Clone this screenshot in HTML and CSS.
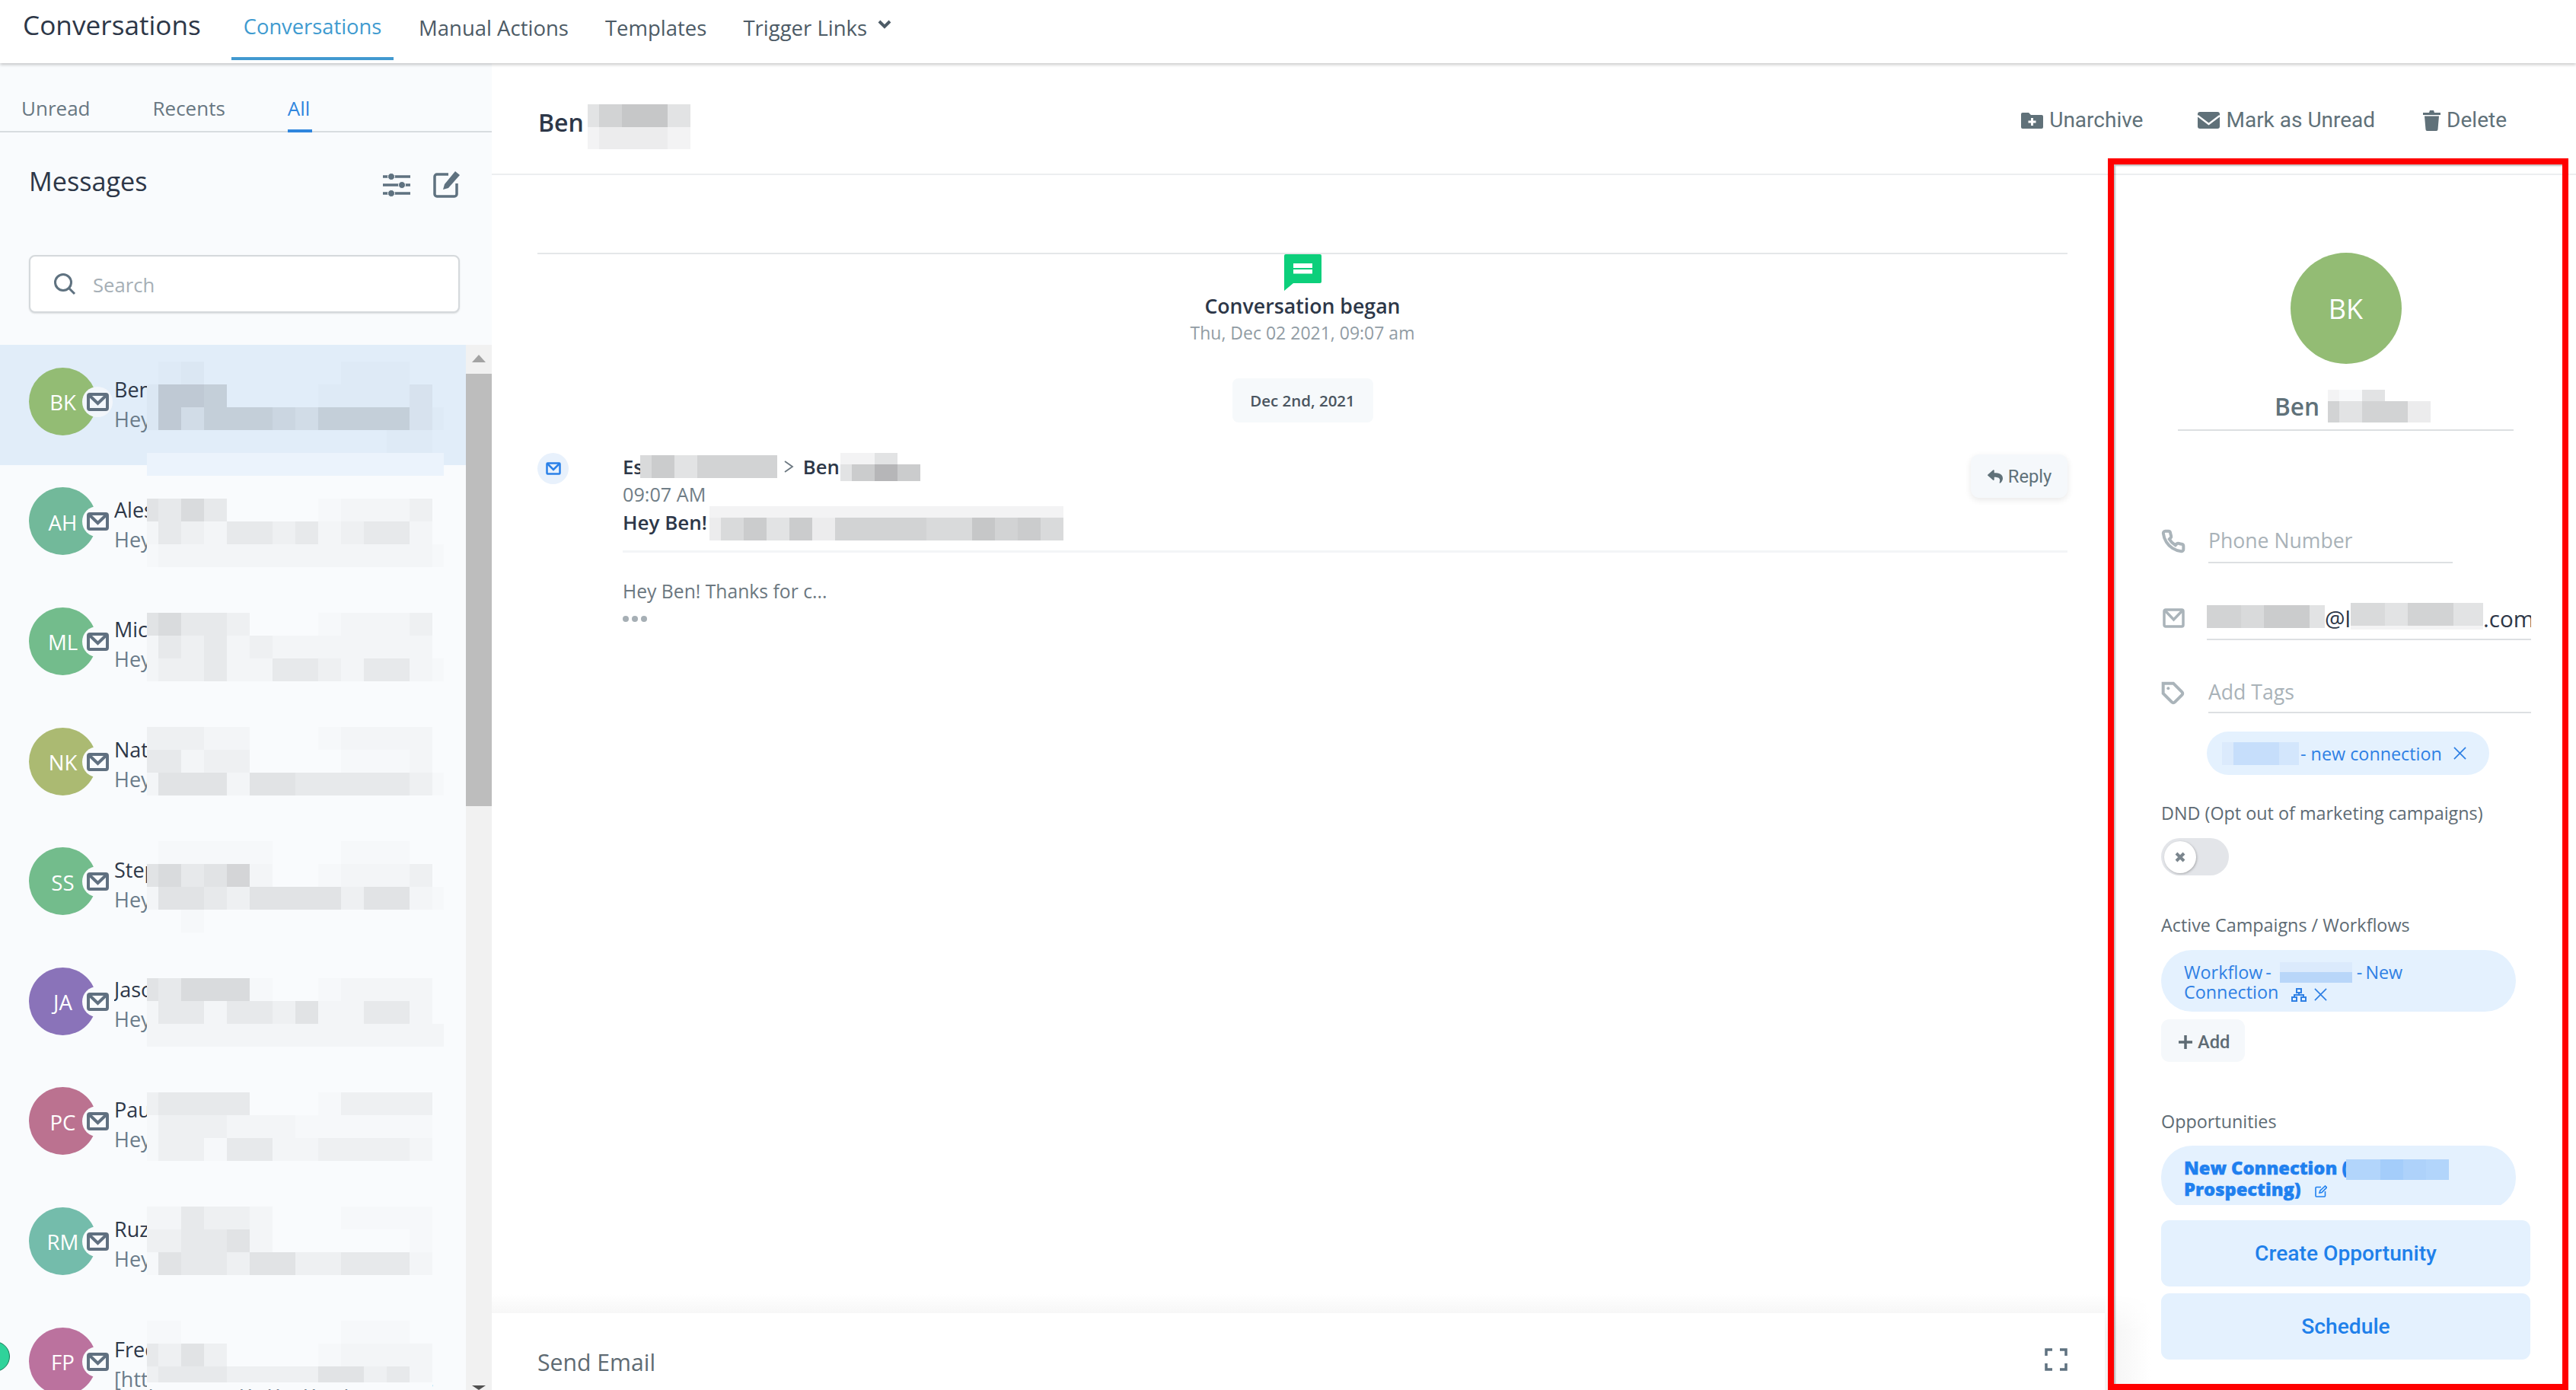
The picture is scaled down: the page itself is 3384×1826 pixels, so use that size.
FILE: index.html
```html
<!DOCTYPE html>
<html lang="en">
<head>
<meta charset="utf-8">
<title>Conversations</title>
<link rel="stylesheet" href="styles.css">
</head>
<body>
<div class="app">
  <header class="topbar">
    <h1 class="app-title">Conversations</h1>
    <nav class="topnav">
      <a class="topnav-item is-active">Conversations</a>
      <a class="topnav-item">Manual Actions</a>
      <a class="topnav-item">Templates</a>
      <a class="topnav-item">Trigger Links
        <svg class="chev" viewBox="0 0 20 14"><path d="M3 3l7 7 7-7"/></svg>
      </a>
    </nav>
  </header>

  <div class="workspace">
    <aside class="sidebar">
      <div class="subtabs">
        <a class="subtab">Unread</a>
        <a class="subtab">Recents</a>
        <a class="subtab is-active">All</a>
      </div>
      <div class="msg-head">
        <h2 class="msg-title">Messages</h2>
        <svg class="ic-sliders" viewBox="0 0 36 32"><path d="M0 5h36M0 16h36M0 27h36"/><circle cx="11" cy="5" r="4.5"/><circle cx="25" cy="16" r="4.5"/><circle cx="11" cy="27" r="4.5"/></svg>
        <svg class="ic-compose" viewBox="0 0 36 36"><path class="ln" d="M20 5H5a3 3 0 0 0-3 3v23a3 3 0 0 0 3 3h23a3 3 0 0 0 3-3V17"/><path class="fl" d="M29 1l6 5-15 17-7 2 2-7z"/></svg>
      </div>
      <div class="search">
        <svg class="ic-search" viewBox="0 0 30 30"><circle cx="13" cy="13" r="10.5"/><path d="M21 21l7 7"/></svg>
        <span class="search-ph">Search</span>
      </div>
      <div class="list">
        <div class="rows">
          <div class="row is-active"><div class="avatar av-bk">BK<span class="notch"><svg class="ic-mail" viewBox="0 0 29 24"><rect x="2" y="2" width="25" height="20" rx="2"/><path d="M3 3l11.500 11L26 3"/></svg></span></div><div class="who"><div class="who-name">Ben K</div><div class="who-sub">Hey Ben</div></div></div>
          <div class="row"><div class="avatar av-ah">AH<span class="notch"><svg class="ic-mail" viewBox="0 0 29 24"><rect x="2" y="2" width="25" height="20" rx="2"/><path d="M3 3l11.500 11L26 3"/></svg></span></div><div class="who"><div class="who-name">Ales H</div><div class="who-sub">Hey Ales</div></div></div>
          <div class="row"><div class="avatar av-ml">ML<span class="notch"><svg class="ic-mail" viewBox="0 0 29 24"><rect x="2" y="2" width="25" height="20" rx="2"/><path d="M3 3l11.500 11L26 3"/></svg></span></div><div class="who"><div class="who-name">Mich</div><div class="who-sub">Hey Mich</div></div></div>
          <div class="row"><div class="avatar av-nk">NK<span class="notch"><svg class="ic-mail" viewBox="0 0 29 24"><rect x="2" y="2" width="25" height="20" rx="2"/><path d="M3 3l11.500 11L26 3"/></svg></span></div><div class="who"><div class="who-name">Nate</div><div class="who-sub">Hey Nate</div></div></div>
          <div class="row"><div class="avatar av-ss">SS<span class="notch"><svg class="ic-mail" viewBox="0 0 29 24"><rect x="2" y="2" width="25" height="20" rx="2"/><path d="M3 3l11.500 11L26 3"/></svg></span></div><div class="who"><div class="who-name">Step</div><div class="who-sub">Hey Step</div></div></div>
          <div class="row"><div class="avatar av-ja">JA<span class="notch"><svg class="ic-mail" viewBox="0 0 29 24"><rect x="2" y="2" width="25" height="20" rx="2"/><path d="M3 3l11.500 11L26 3"/></svg></span></div><div class="who"><div class="who-name">Jason</div><div class="who-sub">Hey Jason</div></div></div>
          <div class="row"><div class="avatar av-pc">PC<span class="notch"><svg class="ic-mail" viewBox="0 0 29 24"><rect x="2" y="2" width="25" height="20" rx="2"/><path d="M3 3l11.500 11L26 3"/></svg></span></div><div class="who"><div class="who-name">Paul</div><div class="who-sub">Hey Paul</div></div></div>
          <div class="row"><div class="avatar av-rm">RM<span class="notch"><svg class="ic-mail" viewBox="0 0 29 24"><rect x="2" y="2" width="25" height="20" rx="2"/><path d="M3 3l11.500 11L26 3"/></svg></span></div><div class="who"><div class="who-name">Ruza</div><div class="who-sub">Hey Ruza</div></div></div>
          <div class="row"><span class="online-dot"></span><div class="avatar av-fp">FP<span class="notch"><svg class="ic-mail" viewBox="0 0 29 24"><rect x="2" y="2" width="25" height="20" rx="2"/><path d="M3 3l11.500 11L26 3"/></svg></span></div><div class="who who-open"><div class="who-name">Fred</div><div class="who-sub">[https://storage.googleapis.com...</div></div></div>
        </div>
        <div class="scrollbar">
          <div class="sb-btn"><span class="tri-up"></span></div>
          <div class="sb-thumb"></div>
          <span class="tri-down"></span>
        </div>
        <svg class="mosaic-list" width="390" height="1351">
          <rect class="whiten" x="0" y="120" width="390"/>
          <rect class="a0" x="15" y="0" width="30"/><rect class="a1" x="45" y="0" width="30"/><rect class="a0" x="255" y="0" width="90"/>
          <rect class="a1" x="0" y="30" width="15"/><rect class="a6" x="15" y="30" width="60"/><rect class="a5" x="75" y="30" width="30"/><rect class="a0" x="225" y="30" width="120"/><rect class="a2" x="345" y="30" width="30"/>
          <rect class="a1" x="0" y="60" width="15"/><rect class="a6" x="15" y="60" width="30"/><rect class="a3" x="45" y="60" width="30"/><rect class="a5" x="75" y="60" width="90"/><rect class="a4" x="165" y="60" width="30"/><rect class="a3" x="195" y="60" width="30"/><rect class="a5" x="225" y="60" width="120"/><rect class="a2" x="345" y="60" width="30"/><rect class="a0" x="375" y="60" width="15"/>
          <rect class="a0" x="315" y="90" width="60"/>

          <rect class="a4" x="0" y="180" width="15"/><rect class="a3" x="15" y="180" width="30"/><rect class="a5" x="45" y="180" width="30"/><rect class="a3" x="75" y="180" width="30"/><rect class="a0" x="225" y="180" width="30"/><rect class="a1" x="255" y="180" width="90"/><rect class="a2" x="345" y="180" width="30"/>
          <rect class="a1" x="0" y="210" width="15"/><rect class="a3" x="15" y="210" width="30"/><rect class="a2" x="45" y="210" width="30"/><rect class="a1" x="75" y="210" width="30"/><rect class="a3" x="105" y="210" width="60"/><rect class="a2" x="165" y="210" width="30"/><rect class="a3" x="195" y="210" width="30"/><rect class="a1" x="225" y="210" width="30"/><rect class="a2" x="255" y="210" width="30"/><rect class="a3" x="285" y="210" width="60"/><rect class="a1" x="345" y="210" width="30"/>
          <rect class="a0" x="0" y="240" width="15"/><rect class="a1" x="15" y="240" width="360"/><rect class="a0" x="375" y="240" width="15"/>

          <rect class="a4" x="0" y="330" width="15"/><rect class="a5" x="15" y="330" width="30"/><rect class="a3" x="45" y="330" width="60"/><rect class="a2" x="105" y="330" width="30"/><rect class="a0" x="225" y="330" width="30"/><rect class="a1" x="255" y="330" width="90"/><rect class="a2" x="345" y="330" width="30"/>
          <rect class="a1" x="0" y="360" width="15"/><rect class="a3" x="15" y="360" width="30"/><rect class="a2" x="45" y="360" width="30"/><rect class="a3" x="75" y="360" width="30"/><rect class="a1" x="105" y="360" width="30"/><rect class="a2" x="135" y="360" width="30"/><rect class="a1" x="165" y="360" width="210"/>
          <rect class="a1" x="0" y="390" width="15"/><rect class="a2" x="15" y="390" width="60"/><rect class="a3" x="75" y="390" width="30"/><rect class="a1" x="105" y="390" width="60"/><rect class="a3" x="165" y="390" width="60"/><rect class="a2" x="225" y="390" width="30"/><rect class="a1" x="255" y="390" width="30"/><rect class="a3" x="285" y="390" width="60"/><rect class="a1" x="345" y="390" width="30"/><rect class="a0" x="375" y="390" width="15"/>

          <rect class="a2" x="0" y="480" width="75"/><rect class="a1" x="75" y="480" width="60"/><rect class="a0" x="225" y="480" width="30"/><rect class="a1" x="255" y="480" width="120"/>
          <rect class="a3" x="0" y="510" width="45"/><rect class="a1" x="45" y="510" width="30"/><rect class="a2" x="75" y="510" width="60"/><rect class="a0" x="255" y="510" width="90"/><rect class="a1" x="345" y="510" width="30"/>
          <rect class="a1" x="0" y="540" width="15"/><rect class="a4" x="15" y="540" width="90"/><rect class="a1" x="105" y="540" width="30"/><rect class="a4" x="135" y="540" width="60"/><rect class="a3" x="195" y="540" width="150"/><rect class="a2" x="345" y="540" width="30"/><rect class="a0" x="375" y="540" width="15"/>

          <rect class="a0" x="15" y="630" width="150"/><rect class="a0" x="255" y="630" width="90"/>
          <rect class="a4" x="0" y="660" width="15"/><rect class="a5" x="15" y="660" width="30"/><rect class="a3" x="45" y="660" width="30"/><rect class="a4" x="75" y="660" width="30"/><rect class="a6" x="105" y="660" width="30"/><rect class="a1" x="135" y="660" width="30"/><rect class="a0" x="225" y="660" width="30"/><rect class="a1" x="255" y="660" width="90"/><rect class="a2" x="345" y="660" width="30"/>
          <rect class="a1" x="0" y="690" width="15"/><rect class="a4" x="15" y="690" width="60"/><rect class="a3" x="75" y="690" width="30"/><rect class="a2" x="105" y="690" width="30"/><rect class="a4" x="135" y="690" width="120"/><rect class="a2" x="255" y="690" width="30"/><rect class="a4" x="285" y="690" width="60"/><rect class="a1" x="345" y="690" width="30"/><rect class="a0" x="375" y="690" width="15"/>
          <rect class="a0" x="45" y="720" width="30"/>

          <rect class="a4" x="0" y="810" width="15"/><rect class="a3" x="15" y="810" width="30"/><rect class="a5" x="45" y="810" width="90"/><rect class="a0" x="135" y="810" width="30"/><rect class="a0" x="225" y="810" width="30"/><rect class="a1" x="255" y="810" width="120"/>
          <rect class="a1" x="0" y="840" width="15"/><rect class="a3" x="15" y="840" width="60"/><rect class="a1" x="75" y="840" width="30"/><rect class="a3" x="105" y="840" width="60"/><rect class="a2" x="165" y="840" width="30"/><rect class="a4" x="195" y="840" width="30"/><rect class="a1" x="225" y="840" width="60"/><rect class="a3" x="285" y="840" width="60"/><rect class="a1" x="345" y="840" width="30"/>
          <rect class="a1" x="0" y="870" width="390"/>

          <rect class="a2" x="0" y="960" width="15"/><rect class="a3" x="15" y="960" width="120"/><rect class="a0" x="225" y="960" width="30"/><rect class="a2" x="255" y="960" width="120"/>
          <rect class="a0" x="0" y="990" width="15"/><rect class="a2" x="15" y="990" width="90"/><rect class="a1" x="105" y="990" width="90"/><rect class="a0" x="195" y="990" width="150"/><rect class="a0" x="345" y="990" width="30"/>
          <rect class="a0" x="0" y="1020" width="15"/><rect class="a2" x="15" y="1020" width="60"/><rect class="a0" x="75" y="1020" width="30"/><rect class="a3" x="105" y="1020" width="60"/><rect class="a1" x="165" y="1020" width="60"/><rect class="a2" x="225" y="1020" width="120"/><rect class="a1" x="345" y="1020" width="30"/>

          <rect class="a1" x="0" y="1110" width="45"/><rect class="a3" x="45" y="1110" width="30"/><rect class="a2" x="75" y="1110" width="60"/><rect class="a1" x="135" y="1110" width="30"/><rect class="a0" x="255" y="1110" width="120"/>
          <rect class="a2" x="0" y="1140" width="45"/><rect class="a3" x="45" y="1140" width="60"/><rect class="a4" x="105" y="1140" width="30"/><rect class="a1" x="135" y="1140" width="30"/><rect class="a0" x="345" y="1140" width="30"/>
          <rect class="a0" x="0" y="1170" width="15"/><rect class="a4" x="15" y="1170" width="30"/><rect class="a3" x="45" y="1170" width="60"/><rect class="a2" x="105" y="1170" width="30"/><rect class="a4" x="135" y="1170" width="60"/><rect class="a2" x="195" y="1170" width="60"/><rect class="a3" x="255" y="1170" width="90"/><rect class="a1" x="345" y="1170" width="30"/>

          <rect class="a0" x="0" y="1260" width="45"/><rect class="a0" x="255" y="1260" width="90"/>
          <rect class="a3" x="0" y="1290" width="15"/><rect class="a2" x="15" y="1290" width="30"/><rect class="a4" x="45" y="1290" width="30"/><rect class="a2" x="75" y="1290" width="30"/><rect class="a0" x="225" y="1290" width="30"/><rect class="a1" x="255" y="1290" width="120"/>
          <rect class="base" x="0" y="1320" width="375"/>
          <rect class="a2 short" x="0" y="1320" width="15"/><rect class="a3 short" x="15" y="1320" width="90"/><rect class="a2 short" x="105" y="1320" width="120"/><rect class="a4 short" x="225" y="1320" width="60"/><rect class="a2 short" x="285" y="1320" width="30"/><rect class="a3 short" x="315" y="1320" width="30"/><rect class="a1 short" x="345" y="1320" width="30"/>
        </svg>
      </div>
    </aside>

    <main class="main">
      <div class="conv-head">
        <div class="conv-name">Ben<svg class="mz mz-head" width="135" height="59"><rect class="b3" x="0" y="0" width="15" height="30"/><rect class="b5" x="15" y="0" width="30" height="30"/><rect class="b7" x="45" y="0" width="60" height="30"/><rect class="b3" x="105" y="0" width="30" height="30"/><rect class="b1" x="0" y="30" width="15" height="29"/><rect class="b2" x="15" y="30" width="90" height="29"/><rect class="b1" x="105" y="30" width="30" height="29"/></svg></div>
        <div class="actions">
          <a class="action action-arch"><svg class="ic-folder" viewBox="0 0 29 22"><path d="M0 3a2 2 0 0 1 2-2h8l3 3h14a2 2 0 0 1 2 2v14a2 2 0 0 1-2 2H2a2 2 0 0 1-2-2z"/><path class="plus" d="M14.500 8v10M9.500 13h10"/></svg>Unarchive</a>
          <a class="action"><svg class="ic-envelope" viewBox="0 0 29 22"><rect width="29" height="22" rx="3"/><path d="M0 5l14.500 11L29 5"/></svg>Mark as Unread</a>
          <a class="action action-del"><svg class="ic-trash" viewBox="0 0 23 28"><path d="M0 4h8l1-3h5l1 3h8v3H0z"/><path d="M2 8.500h19l-1.500 17.500a2 2 0 0 1-2 2h-12a2 2 0 0 1-2-2z"/></svg>Delete</a>
        </div>
      </div>

      <div class="conv-body">
        <section class="thread">
          <div class="thread-scroll">
            <div class="began-rule"></div>
            <div class="began">
              <svg class="ic-bubble" viewBox="0 0 49 48"><path class="bub" d="M2 0h45a2 2 0 0 1 2 2v34a2 2 0 0 1-2 2H12L0 48V2a2 2 0 0 1 2-2z"/><path class="bar" d="M12 12h25v6H12zM12 20h25v5.500H12z"/></svg>
              <div class="began-title">Conversation began</div>
              <div class="began-time">Thu, Dec 02 2021, 09:07 am</div>
              <div class="date-pill">Dec 2nd, 2021</div>
            </div>
            <article class="message">
              <span class="msg-badge"><svg class="ic-mail-blue" viewBox="0 0 20 17"><rect x="1.500" y="1.500" width="17" height="14" rx="1"/><path d="M2 2l8 8 8-8"/></svg></span>
              <div class="msg-body">
                <div class="msg-from">Es<svg class="mz mz-from" width="180" height="30"><rect class="b4" x="0" y="0" width="15" height="30"/><rect class="b6" x="15" y="0" width="30" height="30"/><rect class="b3" x="45" y="0" width="30" height="30"/><rect class="b5" x="75" y="0" width="30" height="30"/><rect class="b5" x="105" y="0" width="75" height="30"/></svg><svg class="ic-gt" viewBox="0 0 14 18"><path d="M2 2l10 7-10 7"/></svg>Ben<svg class="mz mz-to" width="105" height="37"><rect class="b1" x="0" y="0" width="45" height="15"/><rect class="b3" x="45" y="0" width="30" height="15"/><rect class="b3" x="0" y="15" width="15" height="22"/><rect class="b6" x="15" y="15" width="30" height="22"/><rect class="b8" x="45" y="15" width="30" height="22"/><rect class="b6" x="75" y="15" width="30" height="22"/></svg></div>
                <div class="msg-time">09:07 AM</div>
                <div class="msg-subject">Hey Ben!<svg class="mz mz-subj" width="465" height="45"><rect class="b1" x="0" y="0" width="465" height="15"/><rect class="b2" x="0" y="15" width="15" height="30"/><rect class="b4" x="15" y="15" width="30" height="30"/><rect class="b6" x="45" y="15" width="30" height="30"/><rect class="b3" x="75" y="15" width="30" height="30"/><rect class="b6" x="105" y="15" width="30" height="30"/><rect class="b2" x="135" y="15" width="30" height="30"/><rect class="b5" x="165" y="15" width="120" height="30"/><rect class="b4" x="285" y="15" width="60" height="30"/><rect class="b7" x="345" y="15" width="30" height="30"/><rect class="b5" x="375" y="15" width="30" height="30"/><rect class="b6" x="405" y="15" width="30" height="30"/><rect class="b4" x="435" y="15" width="30" height="30"/></svg></div>
                <div class="msg-rule"></div>
                <div class="msg-preview">Hey Ben! Thanks for c...</div>
                <div class="dots"><i></i><i></i><i></i></div>
                <a class="reply"><svg class="ic-reply" viewBox="0 0 512 512"><path d="M8.309 189.836L184.313 37.851C199.719 24.546 224 35.347 224 56.015v80.053c160.629 1.839 288 34.032 288 186.258 0 61.441-39.581 122.309-83.333 154.132-13.653 9.931-33.111-2.533-28.077-18.631 45.344-145.012-21.507-183.51-176.59-185.742V360c0 20.700-24.300 31.453-39.687 18.164l-176.004-152c-11.071-9.562-11.086-26.753 0-36.328z"/></svg>Reply</a>
              </div>
            </article>
          </div>
          <div class="composer-fade"></div>
          <div class="composer">
            <span class="composer-label">Send Email</span>
            <svg class="ic-expand" viewBox="0 0 30 30"><path d="M2 10V2h8M20 2h8v8M28 20v8h-8M10 28H2v-8"/></svg>
          </div>
        </section>

        <aside class="contact">
          <div class="contact-avatar">BK</div>
          <div class="contact-name">Ben<svg class="mz mz-cname" width="135" height="43"><rect class="b1" x="0" y="0" width="15" height="15"/><rect class="b0" x="15" y="0" width="30" height="15"/><rect class="b3" x="45" y="0" width="30" height="15"/><rect class="b5" x="0" y="15" width="15" height="28"/><rect class="b3" x="15" y="15" width="30" height="28"/><rect class="b5" x="45" y="15" width="60" height="28"/><rect class="b2" x="105" y="15" width="30" height="28"/></svg></div>

          <div class="field field-phone">
            <svg class="ic-field" viewBox="0 0 24 24"><path d="M22 16.920v3a2 2 0 0 1-2.180 2 19.790 19.790 0 0 1-8.630-3.070 19.500 19.500 0 0 1-6-6 19.790 19.790 0 0 1-3.070-8.670A2 2 0 0 1 4.110 2h3a2 2 0 0 1 2 1.720 12.840 12.840 0 0 0 .7 2.810 2 2 0 0 1-.45 2.110L8.090 9.910a16 16 0 0 0 6 6l1.270-1.270a2 2 0 0 1 2.110-.45 12.840 12.840 0 0 0 2.810.7A2 2 0 0 1 22 16.92z"/></svg>
            <div class="field-box field-box-short"><span class="ph">Phone Number</span></div>
          </div>
          <div class="field field-email">
            <svg class="ic-field-mail" viewBox="0 0 29 26"><rect x="2" y="2" width="25" height="22" rx="2"/><path d="M3 3l11.500 12L26 3"/></svg>
            <div class="field-box email-box"><svg class="mz mz-e1" width="155" height="30"><rect class="b5" x="0" y="0" width="45" height="30"/><rect class="b4" x="45" y="0" width="30" height="30"/><rect class="b6" x="75" y="0" width="60" height="30"/><rect class="b3" x="135" y="0" width="20" height="30"/></svg><span class="email-txt">@l</span><svg class="mz mz-e2" width="174" height="35"><rect class="b4" x="0" y="0" width="45" height="30"/><rect class="b3" x="45" y="0" width="30" height="30"/><rect class="b5" x="75" y="0" width="60" height="30"/><rect class="b3" x="135" y="0" width="39" height="30"/><rect class="b1" x="0" y="30" width="174" height="5"/></svg><span class="email-txt">.com</span></div>
          </div>
          <div class="field field-tags">
            <svg class="ic-field" viewBox="0 0 24 24"><path d="M20.590 13.410l-7.170 7.170a2 2 0 0 1-2.830 0L2 12V2h10l8.590 8.590a2 2 0 0 1 0 2.820z"/><circle class="dot" cx="7" cy="7" r="1.500"/></svg>
            <div class="field-box"><span class="ph">Add Tags</span></div>
          </div>
          <div class="tag-chip"><svg class="mz mz-tag" width="101" height="30"><rect class="c1" x="0" y="0" width="15" height="30"/><rect class="c3" x="15" y="0" width="60" height="30"/><rect class="c2" x="75" y="0" width="26" height="30"/></svg><span>- new connection</span><svg class="ic-x" viewBox="0 0 18 18"><path d="M1 1l16 16M17 1L1 17"/></svg></div>

          <div class="label label-dnd">DND (Opt out of marketing campaigns)</div>
          <div class="toggle"><span class="knob"><svg viewBox="0 0 14 14"><path d="M2 2l10 10M12 2L2 12"/></svg></span></div>

          <div class="label label-camp">Active Campaigns / Workflows</div>
          <div class="pill pill-work">Workflow -<svg class="mz mz-wf" width="95" height="27"><rect class="c1" x="0" y="0" width="95" height="13"/><rect class="c4" x="0" y="13" width="95" height="14"/></svg>- New<br>Connection<svg class="ic-sitemap" viewBox="0 0 20 18"><path d="M7 1h6v5H7zM1 12h6v5H1zM13 12h6v5h-6zM10 6v3M4 12V9h12v3"/></svg><svg class="ic-x" viewBox="0 0 18 18"><path d="M1 1l16 16M17 1L1 17"/></svg></div>
          <a class="add-btn"><svg viewBox="0 0 20 20"><path d="M10 1v18M1 10h18"/></svg>Add</a>

          <div class="label label-opp">Opportunities</div>
          <div class="opp-clip"><div class="pill pill-opp">New Connection (<svg class="mz mz-opp" width="135" height="27"><rect class="d1" x="0" y="0" width="45" height="27"/><rect class="d3" x="45" y="0" width="30" height="27"/><rect class="d2" x="75" y="0" width="30" height="27"/><rect class="d1" x="105" y="0" width="30" height="27"/></svg><br>Prospecting)<svg class="ic-edit" viewBox="0 0 16 16"><path d="M8 2.500H2a1 1 0 0 0-1 1V14a1 1 0 0 0 1 1h10.500a1 1 0 0 0 1-1V8M6 10l1-3 6.500-6 2 2L9 9.500z"/></svg></div></div>
          <a class="cta cta-first">Create Opportunity</a>
          <a class="cta cta-second">Schedule</a>
        </aside>
      </div>
    </main>
  </div>

  <div class="redbox"></div>
</div>
</body>
</html>
```

FILE: styles.css
```css
* { box-sizing: border-box; }
html, body { margin: 0; padding: 0; }
body { font-family: "Open Sans", "Noto Sans", sans-serif; color: #2d3748; background: #fff; }
h1, h2 { margin: 0; font-weight: 400; }
svg { display: block; flex: none; }

.app { position: relative; width: 3384px; height: 1826px; overflow: hidden; display: flex; flex-direction: column; background: #fff; }

/* top bar */
.topbar { position: relative; z-index: 3; flex: none; height: 83px; display: flex; background: #fff; box-shadow: 0 2px 4px rgba(0,0,0,.22); padding-left: 30px; }
.app-title { font-size: 35.200px; line-height: 64px; color: #2d3748; width: 274px; }
.topnav { display: flex; }
.topnav-item { display: flex; align-items: flex-start; gap: 13px; height: 79px; padding: 18px 16px 0; margin-right: 16px; font-size: 27.500px; line-height: 38px; color: #4d5b66; white-space: nowrap; }
.topnav-item.is-active { width: 213px; margin-right: 17px; justify-content: center; font-size: 27.300px; color: #3f9bd0; border-bottom: 4px solid #4299d0; padding: 16px 0 0; }
.chev { width: 20px; height: 14px; margin-top: 7px; }
.chev path { fill: none; stroke: #4d5b66; stroke-width: 4; }

.workspace { flex: 1; min-height: 0; display: flex; }

/* sidebar */
.sidebar { flex: none; width: 646px; background: #f9fbfd; display: flex; flex-direction: column; }
.subtabs { flex: none; height: 91px; display: flex; padding-left: 28px; gap: 82px; border-bottom: 2px solid #d8dde0; }
.subtab { height: 89px; padding-top: 41px; font-size: 26px; line-height: 36px; color: #687782; }
.subtab.is-active { color: #2f86de; border-bottom: 4px solid #2f86de; height: 91px; width: 32px; }
.msg-head { flex: none; height: 161px; display: flex; align-items: flex-start; padding: 42px 41px 0 38px; }
.msg-title { flex: 1; font-size: 34.200px; line-height: 44px; color: #2d3748; }
.ic-sliders { width: 36px; height: 32px; margin: 11px 30px 0 0; }
.ic-sliders path { stroke: #5f7280; stroke-width: 3.500; fill: none; }
.ic-sliders circle { fill: #5f7280; stroke: #f9fbfd; stroke-width: 1; }
.ic-compose { width: 36px; height: 36px; margin-top: 8px; }
.ic-compose .ln { fill: none; stroke: #5f7280; stroke-width: 3.500; }
.ic-compose .fl { fill: #5f7280; }
.search { flex: none; width: 566px; height: 76px; margin-left: 38px; display: flex; align-items: center; padding-left: 30px; background: #fff; border: 2px solid #d5d9dc; border-radius: 8px; box-shadow: 0 1px 2px rgba(0,0,0,.12); }
.ic-search { width: 30px; height: 30px; margin-right: 22px; }
.ic-search circle, .ic-search path { fill: none; stroke: #5f7280; stroke-width: 3; }
.search-ph { font-size: 25.700px; color: #a6afb6; padding-top: 2px; }

.list { position: relative; flex: 1; min-height: 0; margin-top: 42px; display: flex; }
.rows { width: 612px; flex: none; }
.row { position: relative; height: 157.600px; display: flex; align-items: center; padding: 0 0 9px 38px; }
.row.is-active { background: #e1edf9; }
.avatar { position: relative; flex: none; width: 89px; height: 89px; border-radius: 50%; display: flex; align-items: center; justify-content: center; padding-top: 2px; font-size: 27.600px; color: #fff; }
.av-bk { background: #93bc74; }
.av-ah { background: #72b99a; }
.av-ml { background: #73bc8c; }
.av-nk { background: #abba72; }
.av-ss { background: #73bc8c; }
.av-ja { background: #8a73b9; }
.av-pc { background: #bb7290; }
.av-rm { background: #74bcab; }
.av-fp { background: #bb729e; }
.notch { position: absolute; left: 70px; top: 25px; width: 40px; height: 40px; border-radius: 50%; background: #f9fbfd; display: flex; align-items: center; justify-content: center; }
.row.is-active .notch { background: #f2f6fb; }
.ic-mail { width: 29px; height: 24px; }
.ic-mail rect, .ic-mail path { fill: none; stroke: #607080; stroke-width: 4; }
.who { width: 43px; margin-left: 23px; overflow: hidden; white-space: nowrap; font-size: 27px; line-height: 39px; padding-top: 8px; }
.who-open { overflow: visible; }
.who-name { color: #2d3748; }
.who-sub { color: #6b7c8a; }
.who-open .who-name { width: 43px; overflow: hidden; }
.online-dot { position: absolute; left: -27px; top: 48px; width: 40px; height: 40px; border-radius: 50%; background: #2fd39a; border: 1px solid #1a7a58; }

.scrollbar { flex: none; width: 34px; background: #f1f1f1; position: relative; }
.sb-btn { height: 38px; display: flex; justify-content: center; padding-top: 13px; }
.tri-up { width: 0; height: 0; border: 9px solid transparent; border-top: 0; border-bottom: 10px solid #a3a3a3; }
.sb-thumb { height: 568px; background: #bdbdbd; }
.tri-down { position: absolute; left: 8px; bottom: 0; width: 0; height: 0; border: 9px solid transparent; border-bottom: 0; border-top: 6px solid #505050; }

.mosaic-list { position: absolute; left: 193px; top: 22px; }
.mosaic-list rect { height: 30px; }
.mosaic-list .short { height: 21px; }
.mosaic-list .a0 { fill: rgba(0,0,0,.012); }
.mosaic-list .a1 { fill: rgba(0,0,0,.025); }
.mosaic-list .a2 { fill: rgba(0,0,0,.045); }
.mosaic-list .a3 { fill: rgba(0,0,0,.07); }
.mosaic-list .a4 { fill: rgba(0,0,0,.095); }
.mosaic-list .a5 { fill: rgba(0,0,0,.125); }
.mosaic-list .a6 { fill: rgba(0,0,0,.15); }
.mosaic-list .whiten { fill: #ebf3fc; }
.mosaic-list .base { fill: #f9fbfd; }

/* mosaic tones */
.mz { display: inline-block; vertical-align: top; }
.mz .b0 { fill: #f8f9fa; }
.mz .b1 { fill: #f3f3f4; }
.mz .b2 { fill: #ececed; }
.mz .b3 { fill: #e2e3e4; }
.mz .b4 { fill: #d9dadb; }
.mz .b5 { fill: #d2d3d4; }
.mz .b6 { fill: #cbcccd; }
.mz .b7 { fill: #c6c7c8; }
.mz .b8 { fill: #b6b6b8; }
.mz .c1 { fill: #dbeafc; }
.mz .c2 { fill: #d3e6fc; }
.mz .c3 { fill: #c6defb; }
.mz .c4 { fill: #b8d6f9; }
.mz .d1 { fill: #b2d5fb; }
.mz .d2 { fill: #aed2fa; }
.mz .d3 { fill: #a4cdfa; }

/* main */
.main { flex: 1; min-width: 0; display: flex; flex-direction: column; }
.conv-head { flex: none; height: 147px; display: flex; align-items: center; justify-content: space-between; padding: 0 91px 0 61px; border-bottom: 2px solid #eceef0; }
.conv-name { display: flex; font-size: 32px; font-weight: 600; line-height: 47px; color: #2d3748; margin-top: 22px; }
.mz-head { margin-left: 5px; }
.actions { display: flex; align-items: center; gap: 70px; margin-top: 4px; }
.action { display: flex; align-items: center; gap: 8px; font-family: Roboto, sans-serif; font-size: 28px; line-height: 36px; color: #607179; white-space: nowrap; }
.action-arch { margin-right: 2px; }
.action-del { margin-left: -7px; }
.ic-folder, .ic-envelope { width: 29px; height: 22px; }
.ic-folder path { fill: #607179; }
.ic-folder .plus { fill: none; stroke: #fff; stroke-width: 3; }
.ic-envelope rect { fill: #607179; }
.ic-envelope path { fill: none; stroke: #fff; stroke-width: 2.500; }
.ic-trash { width: 23px; height: 28px; }
.ic-trash path { fill: #607179; }

.conv-body { flex: 1; min-height: 0; display: flex; }
.thread { flex: 1; min-width: 0; display: flex; flex-direction: column; }
.thread-scroll { flex: 1; min-height: 0; padding: 102px 49px 0 60px; }
.began-rule { height: 2px; background: #e4e7e9; }
.began { display: flex; flex-direction: column; align-items: center; }
.ic-bubble { width: 49px; height: 48px; }
.ic-bubble .bub { fill: #0ccf7b; }
.ic-bubble .bar { fill: #fff; }
.began-title { font-size: 26.700px; font-weight: 600; line-height: 36px; color: #2d3748; margin-top: 2px; }
.began-time { font-size: 23px; line-height: 34px; color: #919ca4; }
.date-pill { width: 185px; height: 58px; margin-top: 43px; display: flex; align-items: center; justify-content: center; background: #f6f9fb; border-radius: 8px; font-size: 20.500px; font-weight: 600; color: #4a5560; }
.message { display: flex; margin-top: 36px; }
.msg-badge { flex: none; width: 41px; height: 41px; margin: 4px 71px 0 0; border-radius: 50%; background: #e8f1fc; display: flex; align-items: center; justify-content: center; }
.ic-mail-blue { width: 20px; height: 17px; }
.ic-mail-blue rect, .ic-mail-blue path { fill: none; stroke: #2a80e8; stroke-width: 2.500; }
.msg-body { position: relative; flex: 1; min-width: 0; padding-top: 4px; }
.msg-from { display: flex; align-items: center; height: 36px; font-size: 25.700px; font-weight: 600; color: #2d3748; }
.mz-from { margin-left: -4px; }
.ic-gt { width: 14px; height: 18px; margin: 0 12px 0 8px; }
.ic-gt path { fill: none; stroke: #6b7780; stroke-width: 1.800; }
.mz-to { margin-top: 0; margin-left: 1px; }
.msg-time { font-size: 25.200px; line-height: 36px; color: #6f7d86; }
.msg-subject { display: flex; align-items: flex-end; height: 38px; font-size: 26px; font-weight: 600; line-height: 38px; color: #2d3748; }
.mz-subj { margin: 0 0 -5px 3px; }
.msg-rule { height: 3px; margin-top: 18px; background: #f3f5f7; }
.msg-preview { margin-top: 34px; font-size: 24.700px; line-height: 34px; color: #6b7780; }
.dots { display: flex; gap: 4px; margin-top: 15px; }
.dots i { width: 8px; height: 8px; border-radius: 50%; background: #a6afb5; }
.reply { position: absolute; right: 0; top: 6px; width: 127px; height: 57px; display: flex; align-items: center; justify-content: center; gap: 6px; background: #f5f8fb; border-radius: 11px; box-shadow: 0 3px 8px rgba(0,0,0,.09); font-family: Roboto, sans-serif; font-size: 23.700px; color: #607179; }
.ic-reply { width: 22px; height: 20px; }
.ic-reply path { fill: #607179; }

.composer-fade { flex: none; height: 25px; background: linear-gradient(#fff, #f7f7f7); }
.composer { flex: none; height: 101px; display: flex; justify-content: space-between; padding: 47px 49px 0 60px; }
.composer-label { font-size: 30.200px; line-height: 36px; color: #5f6b73; }
.ic-expand { width: 30px; height: 30px; margin: -1px 0 0 0; }
.ic-expand path { fill: none; stroke: #5f7280; stroke-width: 3.500; }

/* contact panel */
.contact { position: relative; flex: none; width: 619px; padding: 102px 60px 0 74px; display: flex; flex-direction: column; background: #fff; }
.contact::before { content: ""; position: absolute; left: 0; bottom: 0; width: 60px; height: 126px; background: linear-gradient(90deg, #f3f3f3, #fff); -webkit-mask-image: linear-gradient(transparent, #000 50px); mask-image: linear-gradient(transparent, #000 50px); }
.contact > * { position: relative; }
.contact-avatar { flex: none; width: 146px; height: 146px; align-self: center; border-radius: 50%; background: #93bc74; display: flex; align-items: center; justify-content: center; font-size: 36px; color: #fff; }
.contact-name { flex: none; height: 54px; margin: 34px 22px 0; padding-left: 127px; display: flex; font-size: 31.600px; font-weight: 600; line-height: 44px; color: #607179; border-bottom: 2px solid #dcdfe1; }
.mz-cname { margin-left: 11px; }
.field { flex: none; display: flex; align-items: flex-start; }
.field-phone { margin-top: 114px; height: 60px; }
.field-email { margin-top: 45px; height: 56px; }
.field-tags { margin-top: 39px; height: 57px; }
.ic-field { width: 32px; height: 32px; margin: 15px 30px 0 0; }
.ic-field path { fill: none; stroke: #aab4ba; stroke-width: 3; }
.ic-field .dot { fill: #aab4ba; }
.ic-field-mail { width: 29px; height: 26px; margin: 14px 31px 0 2px; }
.ic-field-mail rect, .ic-field-mail path { fill: none; stroke: #aab4ba; stroke-width: 3.500; }
.field-box { flex: none; width: 424px; height: 100%; border-bottom: 2px solid #dde0e2; font-size: 26.600px; line-height: 60px; }
.field-box-short { width: 321px; }
.field-tags .field-box { line-height: 58px; }
.ph { color: #a9b2b8; }
.email-box { display: flex; overflow: hidden; width: 426px; margin-left: -2px; font-size: 29.600px; line-height: 56px; color: #2d3748; }
.mz-e1 { margin-top: 10px; }
.mz-e2 { margin-top: 7px; }
.email-txt { flex: none; }
.tag-chip { flex: none; width: 371px; height: 57px; margin: 24px 0 0 60px; display: flex; align-items: center; padding-left: 20px; border-radius: 29px; background: #e4f1fe; font-size: 23.350px; color: #2f80e4; }
.tag-chip > span { margin-left: 2px; }
.tag-chip .ic-x { margin-left: 15px; }
.ic-x { width: 17px; height: 17px; }
.ic-x path { fill: none; stroke: #2f80e4; stroke-width: 1.800; }
.label { flex: none; font-size: 23.350px; line-height: 34px; color: #5e6b74; white-space: nowrap; }
.label-dnd { margin-top: 33px; }
.label-camp { margin-top: 48px; }
.label-opp { margin-top: 61px; }
.toggle { flex: none; width: 89px; height: 49px; margin-top: 16px; padding: 4px; border-radius: 25px; background: #e3e5e9; }
.knob { display: flex; width: 42px; height: 42px; border-radius: 50%; background: #fff; box-shadow: 1px 1px 3px rgba(0,0,0,.25); align-items: center; justify-content: center; }
.knob svg { width: 14px; height: 14px; }
.knob path { fill: none; stroke: #7b868e; stroke-width: 4; }
.pill { width: 466px; padding-left: 30px; border-radius: 41px; background: #e4f1fe; color: #2f80e4; font-size: 23.350px; line-height: 25.700px; }
.pill-work { flex: none; height: 81px; margin-top: 16px; padding-top: 16px; word-spacing: -2px; }
.mz-wf { display: inline-block; vertical-align: -5px; margin: 0 6px 0 11px; }
.ic-sitemap { display: inline-block; width: 20px; height: 18px; margin: 0 10px 0 17px; vertical-align: -4px; }
.ic-sitemap path { fill: none; stroke: #2f80e4; stroke-width: 2; }
.pill-work .ic-x { display: inline-block; vertical-align: -3px; }
.add-btn { flex: none; width: 110px; height: 56px; margin-top: 10px; display: flex; align-items: center; padding: 3px 0 0 22px; gap: 6px; background: #f5f8fb; border-radius: 11px; font-family: Roboto, sans-serif; font-weight: 500; font-size: 23.700px; color: #5e6b74; }
.add-btn svg { width: 20px; height: 20px; }
.add-btn path { fill: none; stroke: #5e6b74; stroke-width: 3.500; }
.opp-clip { flex: none; height: 78px; margin-top: 15px; overflow: hidden; }
.pill-opp { height: 84px; padding-top: 17px; font-weight: 800; color: #1f80ef; line-height: 25px; font-size: 23.700px; -webkit-text-stroke: .5px #1f80ef; }
.mz-opp { display: inline-block; vertical-align: -7px; margin-left: -3px; }
.ic-edit { display: inline-block; width: 16px; height: 16px; margin-left: 19px; vertical-align: -2px; }
.ic-edit path { fill: none; stroke: #1f80ef; stroke-width: 1.600; }
.cta { flex: none; height: 87px; display: flex; align-items: center; justify-content: center; background: #e4f1fe; border-radius: 11px; font-family: Roboto, sans-serif; font-weight: 500; font-size: 28.200px; color: #2080ea; }
.cta-first { margin-top: 20px; }
.cta-second { margin-top: 9px; }

/* annotation drawn over the screenshot */
.redbox { position: absolute; left: 2769px; top: 208px; width: 605px; height: 1618px; border: 8px solid #f00; box-shadow: inset 2px 2px 2px rgba(0,0,0,.25); pointer-events: none; z-index: 5; }
```
